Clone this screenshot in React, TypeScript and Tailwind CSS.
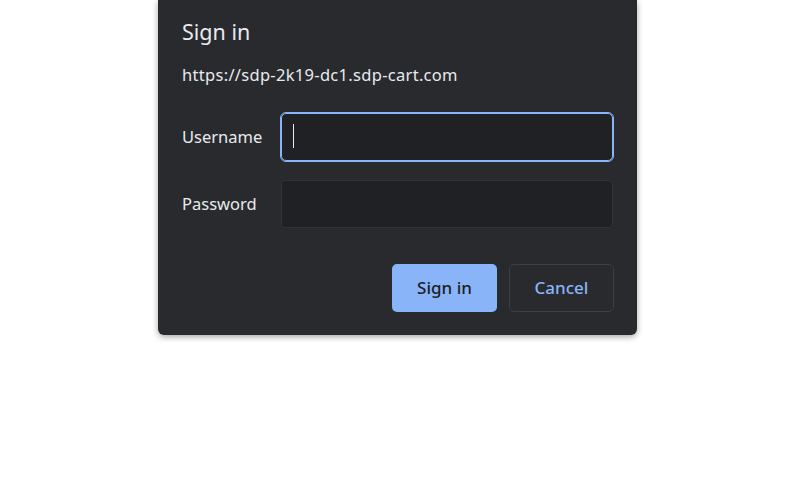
export default function App() {
  const font = { fontFamily: '"Noto Sans", "Segoe UI", sans-serif' };
  return (
    <div className="w-[790px] h-[481px] bg-white overflow-hidden" style={font}>
      <div className="ml-[158px] w-[479px] bg-[#292a2d] rounded-b-[6px] shadow-[0_2px_6px_rgba(0,0,0,0.35)] px-6 pt-[17px] pb-[23px] text-[#e8eaed]">
        <div className="text-[21.5px] leading-[30px]">Sign in</div>
        <div className="mt-[16px] text-[16.5px] leading-[24px] tracking-[0.3px]">https://sdp-2k19-dc1.sdp-cart.com</div>
        <div className="mt-[26px] flex items-center">
          <div className="w-[99px] text-[16.5px]">Username</div>
          <div className="relative w-[332px] h-[48px] rounded-[5px] bg-[#202124] border border-[#8ab4f8] outline outline-1 outline-[#8ab4f8]">
            <div className="absolute left-[11px] top-[10px] w-[1px] h-[24px] bg-[#e8eaed]" />
          </div>
        </div>
        <div className="mt-[19px] flex items-center">
          <div className="w-[99px] text-[16.5px]">Password</div>
          <div className="w-[332px] h-[48px] rounded-[4px] bg-[#202124] border border-[#323337]" />
        </div>
        <div className="mt-[36px] -mr-px flex justify-end gap-3">
          <button className="w-[105px] h-[48px] rounded-[5px] bg-[#8ab4f8] text-[#202124] text-[17px] font-medium">Sign in</button>
          <button className="w-[105px] h-[48px] rounded-[5px] border border-[#3c4043] text-[#8ab4f8] text-[17px] font-medium">Cancel</button>
        </div>
      </div>
    </div>
  );
}
